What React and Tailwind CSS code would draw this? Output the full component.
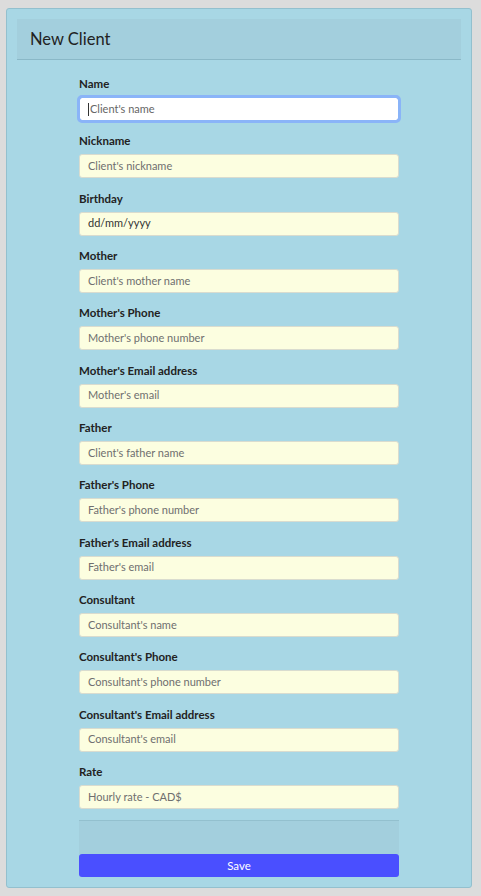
import React from "react";

const fields = [
  { label: "Name", ph: "Client's name", focus: true },
  { label: "Nickname", ph: "Client's nickname" },
  { label: "Birthday", ph: "dd/mm/yyyy", value: true },
  { label: "Mother", ph: "Client's mother name" },
  { label: "Mother's Phone", ph: "Mother's phone number" },
  { label: "Mother's Email address", ph: "Mother's email" },
  { label: "Father", ph: "Client's father name" },
  { label: "Father's Phone", ph: "Father's phone number" },
  { label: "Father's Email address", ph: "Father's email" },
  { label: "Consultant", ph: "Consultant's name" },
  { label: "Consultant's Phone", ph: "Consultant's phone number" },
  { label: "Consultant's Email address", ph: "Consultant's email" },
  { label: "Rate", ph: "Hourly rate - CAD$" },
];

export default function App() {
  return (
    <div className="min-h-[896px] bg-[#dcdcdc] pt-[8px] px-[6px] pb-[8px] font-['Lato',sans-serif]">
      <div className="w-[466px] border border-[#93c0ce] rounded-[3px] bg-[#a8d7e5] p-[10px]">
        <div className="bg-[#a3cfdd] border-b border-[#8ab8c7] h-[41px] flex items-center pl-[13px]">
          <h1 className="text-[16.5px] text-[#222] leading-none">New Client</h1>
        </div>
        <div className="w-[320px] mx-auto pt-[15px] flex flex-col">
          {fields.map((f) => (
            <div key={f.label} className="flex flex-col h-[57.33px]">
              <label className="text-[11.5px] font-bold text-[#222] leading-[15px] h-[22px] pt-[1px]">{f.label}</label>
              {f.focus ? (
                <div className="h-[24px] rounded-[3px] bg-white outline outline-[3px] outline-[#8ab4f8] -outline-offset-1 border border-[#7fa8ef] flex items-center px-[8px] text-[11px] text-[#666]">
                  <span className="w-px h-[13px] bg-[#333] mr-px" />
                  Client's name
                </div>
              ) : (
                <div className={"h-[24px] rounded-[3px] bg-[#fcfee0] border border-[#d9dccf] flex items-center px-[8px] text-[11px] " + (f.value ? "text-[#333]" : "text-[#6f6f6f]")}>
                  {f.ph}
                </div>
              )}
            </div>
          ))}
          <div className="border-t border-[#93c0ce] bg-[#a3cfdd] h-[34px]" />
          <button className="h-[23px] bg-[#4a4fff] rounded-[3px] text-white text-[11.5px] flex items-center justify-center">Save</button>
        </div>
      </div>
    </div>
  );
}
